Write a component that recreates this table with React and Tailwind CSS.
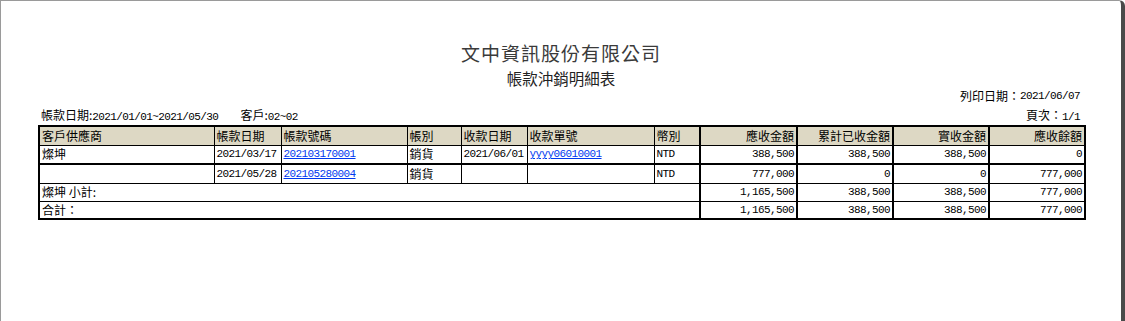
import React from 'react';

const cjk = "font-['Noto_Sans_CJK_TC','Noto_Sans_CJK_SC',sans-serif] text-[12px]";
const mono = "font-['Liberation_Mono','Noto_Sans_CJK_TC',monospace] text-[11px] tracking-[-0.6px]";

const M = ({ children }) => <span className={mono}>{children}</span>;

const rows = [
  {
    vendor: '燦坤',
    date: '2021/03/17',
    no: '202103170001',
    type: '銷貨',
    payDate: '2021/06/01',
    payNo: 'yyyy06010001',
    cur: 'NTD',
    amt: '388,500',
    paid: '388,500',
    real: '388,500',
    rest: '0',
  },
  {
    vendor: '',
    date: '2021/05/28',
    no: '202105280004',
    type: '銷貨',
    payDate: '',
    payNo: '',
    cur: 'NTD',
    amt: '777,000',
    paid: '0',
    real: '0',
    rest: '777,000',
  },
];

const totals = [
  { label: '燦坤 小計:', amt: '1,165,500', paid: '388,500', real: '388,500', rest: '777,000' },
  { label: '合計：', amt: '1,165,500', paid: '388,500', real: '388,500', rest: '777,000' },
];

const App = () => {
  const td = 'border border-black px-[2px] py-0 leading-[16px] whitespace-nowrap';
  const num = 'border-x-2 text-right';
  const link = 'text-[#0038f0] underline';

  return (
    <div className="w-[1125px] h-[321px] bg-white border-t border-l border-[#9a9a9a] border-r-4 border-r-[#4a4a4a] rounded-tr-[6px] overflow-hidden text-black">
      <div className="flex flex-col pt-[40px] pl-[37px] pr-[37px]">
        {/* 標題 */}
        <div className="flex flex-col items-center">
          <div className="font-['Noto_Sans_CJK_TC',sans-serif] text-[19px] leading-[24px] text-[#3a3a3a] tracking-[1px]">
            文中資訊股份有限公司
          </div>
          <div className="mt-[3px] font-['Noto_Sans_CJK_TC',sans-serif] text-[15.5px] leading-[20px] text-[#222]">
            帳款沖銷明細表
          </div>
        </div>

        <div className={`flex justify-end pr-[4px] leading-[16px] ${cjk}`}>
          列印日期：<M>2021/06/07</M>
        </div>

        <div className={`mt-[3px] flex justify-between items-center pl-[3px] pr-[4px] leading-[16px] ${cjk}`}>
          <div>
            帳款日期:<M>2021/01/01~2021/05/30</M>
            <span className="ml-[22px]">客戶:</span>
            <M>02~02</M>
          </div>
          <div>
            頁次：<M>1/1</M>
          </div>
        </div>

        {/* 明細表 */}
        <table className="w-[1046px] table-fixed border-collapse border-2 border-black">
          <colgroup>
            <col className="w-[175px]" />
            <col className="w-[67px]" />
            <col className="w-[126px]" />
            <col className="w-[54px]" />
            <col className="w-[66px]" />
            <col className="w-[127px]" />
            <col className="w-[46px]" />
            <col className="w-[97px]" />
            <col className="w-[96px]" />
            <col className="w-[96px]" />
            <col className="w-[96px]" />
          </colgroup>
          <thead>
            <tr className="bg-[#ddd8c4] h-[19px]">
              <th className={`${td} ${cjk} font-normal text-left`}>客戶供應商</th>
              <th className={`${td} ${cjk} font-normal text-left`}>帳款日期</th>
              <th className={`${td} ${cjk} font-normal text-left`}>帳款號碼</th>
              <th className={`${td} ${cjk} font-normal text-left`}>帳別</th>
              <th className={`${td} ${cjk} font-normal text-left`}>收款日期</th>
              <th className={`${td} ${cjk} font-normal text-left`}>收款單號</th>
              <th className={`${td} ${cjk} font-normal text-left`}>幣別</th>
              <th className={`${td} ${cjk} ${num} font-normal`}>應收金額</th>
              <th className={`${td} ${cjk} ${num} font-normal`}>累計已收金額</th>
              <th className={`${td} ${cjk} ${num} font-normal`}>實收金額</th>
              <th className={`${td} ${cjk} ${num} font-normal`}>應收餘額</th>
            </tr>
          </thead>
          <tbody>
            {rows.map((r, i) => {
              const rb = i === 0 ? 'border-b-2' : '';
              return (
                <tr key={r.no} className={i === 0 ? 'h-[19px]' : 'h-[19px]'}>
                  <td className={`${td} ${rb} ${cjk}`}>{r.vendor}</td>
                  <td className={`${td} ${rb} ${mono}`}>{r.date}</td>
                  <td className={`${td} ${rb} ${mono}`}>
                    <a href="#" className={link}>{r.no}</a>
                  </td>
                  <td className={`${td} ${rb} ${cjk}`}>{r.type}</td>
                  <td className={`${td} ${rb} ${mono}`}>{r.payDate}</td>
                  <td className={`${td} ${rb} ${mono}`}>
                    {r.payNo && <a href="#" className={link}>{r.payNo}</a>}
                  </td>
                  <td className={`${td} ${rb} ${mono}`}>{r.cur}</td>
                  <td className={`${td} ${rb} ${num} ${mono}`}>{r.amt}</td>
                  <td className={`${td} ${rb} ${num} ${mono}`}>{r.paid}</td>
                  <td className={`${td} ${rb} ${num} ${mono}`}>{r.real}</td>
                  <td className={`${td} ${rb} ${num} ${mono}`}>{r.rest}</td>
                </tr>
              );
            })}
            {totals.map((t) => (
              <tr key={t.label} className="h-[18px]">
                <td colSpan={7} className={`${td} ${cjk}`}>{t.label}</td>
                <td className={`${td} ${num} ${mono}`}>{t.amt}</td>
                <td className={`${td} ${num} ${mono}`}>{t.paid}</td>
                <td className={`${td} ${num} ${mono}`}>{t.real}</td>
                <td className={`${td} ${num} ${mono}`}>{t.rest}</td>
              </tr>
            ))}
          </tbody>
        </table>
      </div>
    </div>
  );
};

export default App;
